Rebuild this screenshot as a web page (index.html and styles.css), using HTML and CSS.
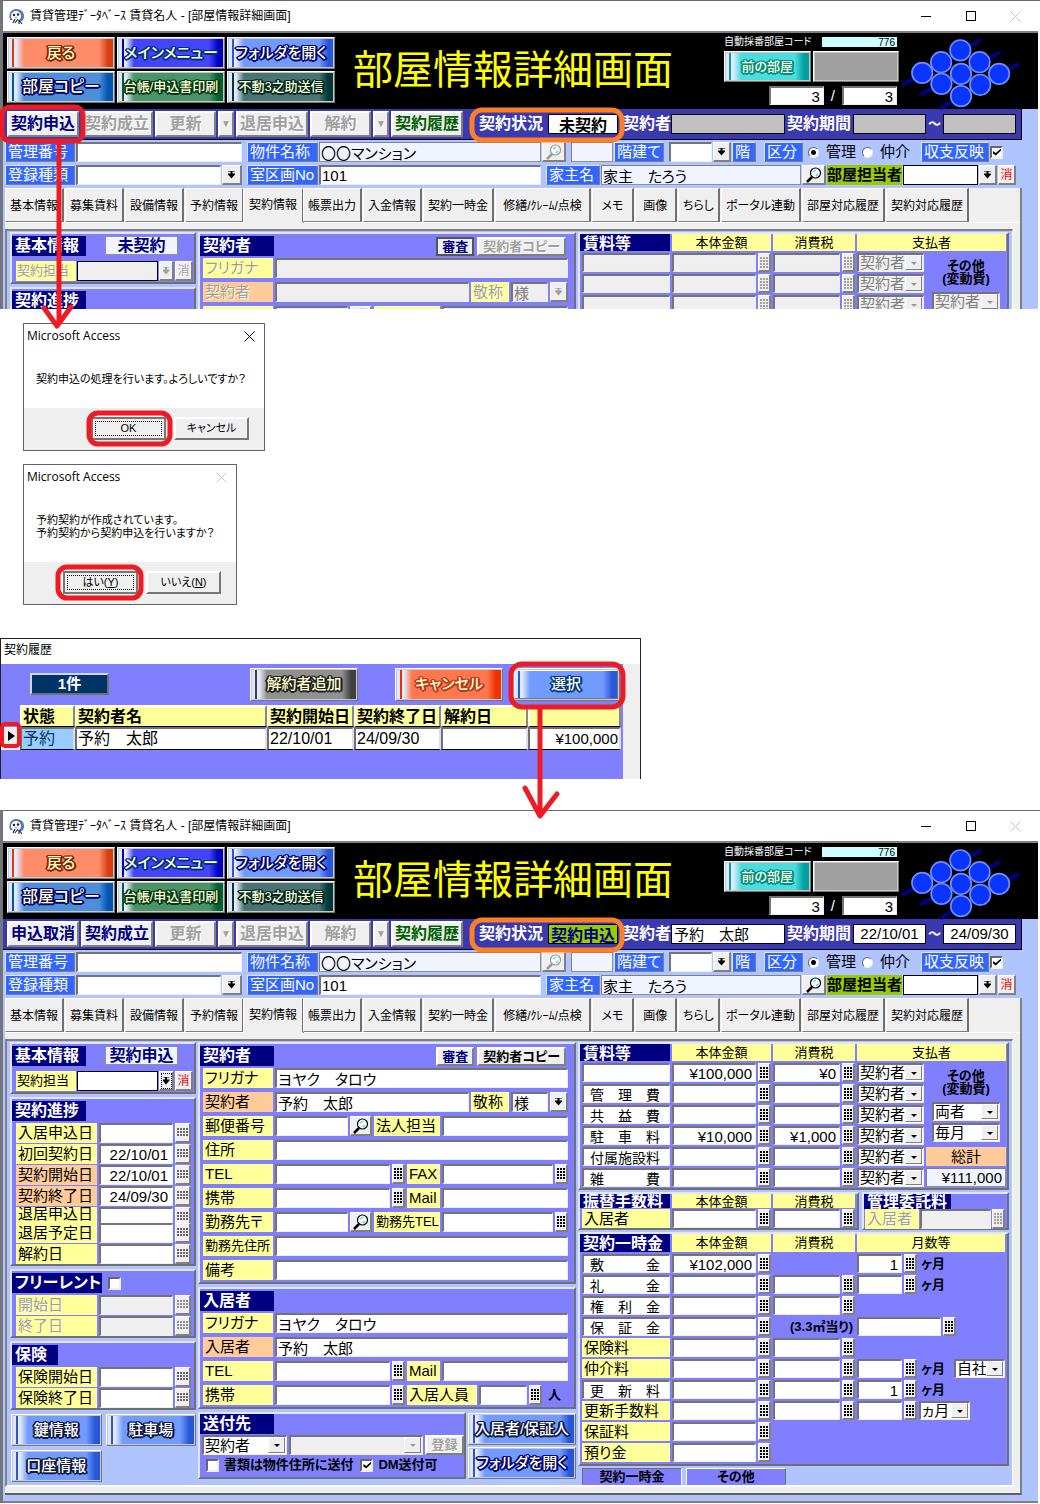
FILE: index.html
```html
<!DOCTYPE html>
<html lang="ja">
<head>
<meta charset="utf-8">
<title>契約申込の手順</title>
<link rel="stylesheet" href="styles.css">
</head>
<body>
<svg class="defs" aria-hidden="true">
  <symbol id="bird" viewBox="0 0 17 17">
    <path d="M2 12C0 6 3 1 8 1c5 0 8 3 8 7 0 3-1 4-2 5" fill="#5a78b8"/>
    <circle cx="8" cy="8" r="5" fill="#fff"/>
    <circle cx="6" cy="7" r="1.2" fill="#123"/><circle cx="10" cy="6.500" r="1.200" fill="#123"/>
    <path d="M6.500 9l3-.5-1.500 2.500z" fill="#e9a23b"/>
    <path d="M5 15l2-4m0 4l3-4m1 1v4m0-4l3 4" stroke="#1d2f6b" stroke-width="1.200" fill="none"/>
  </symbol>
  <symbol id="lens" viewBox="0 0 18 18">
    <path d="M7 11L2 16" stroke="currentColor" stroke-width="2.500"/>
    <circle cx="10.500" cy="7" r="5" fill="#fff" stroke="currentColor" stroke-width="1.200"/>
    <path d="M8 6l3-2M11 10l2-2" stroke="#3fe0ee" stroke-width="1.500"/>
  </symbol>
  <symbol id="logo" viewBox="615 97 365 220">
    <path d="M858 108L628 240M915 145L685 268M973 180L743 310" stroke="#000080" stroke-width="12" stroke-linecap="round"/>
    <g fill="#0a34ff" stroke="#6f8dff" stroke-width="5">
      <circle cx="800" cy="137" r="31"/><circle cx="742" cy="173" r="31"/><circle cx="858" cy="173" r="31"/>
      <circle cx="685" cy="205" r="31"/><circle cx="802" cy="208" r="31"/><circle cx="917" cy="208" r="31"/>
      <circle cx="743" cy="238" r="31"/><circle cx="860" cy="241" r="31"/><circle cx="802" cy="275" r="31"/>
    </g>
  </symbol>
  <symbol id="close" viewBox="0 0 11 11"><path d="M.5.5l10 10M10.500.5l-10 10" stroke="currentColor" fill="none"/></symbol>
</svg>

<section class="window window-cut">
  <header class="titlebar">
    <svg class="app-icon"><use href="#bird"/></svg>
    <h2>賃貸管理ﾃﾞｰﾀﾍﾞｰｽ 賃貸名人 - [部屋情報詳細画面]</h2>
    <button class="ctl" aria-label="最小化"><i class="min"></i></button>
    <button class="ctl" aria-label="最大化"><i class="max"></i></button>
    <button class="ctl off" aria-label="閉じる"><svg class="x"><use href="#close"/></svg></button>
  </header>
  <div class="app">
    <div class="banner">
      <div class="main-buttons">
        <button class="pic red">戻る</button><button class="pic blue">メインメニュー</button><button class="pic sky">フォルダを開く</button>
        <button class="pic azure">部屋コピー</button><button class="pic green small">台帳/申込書印刷</button><button class="pic teal small">不動3之助送信</button>
      </div>
      <h1>部屋情報詳細画面</h1>
      <div class="code">
        <div class="code-line"><label for="a-code">自動採番部屋コード</label><input id="a-code" value="776" readonly></div>
        <div class="code-buttons"><button class="pic aqua small">前の部屋</button><button class="pic blank" aria-label="次の部屋" disabled></button></div>
        <div class="code-page"><input class="f r" value="3" aria-label="現在"><span>/</span><input class="f r" value="3" aria-label="総数"></div>
      </div>
      <svg class="logo"><use href="#logo"/></svg>
    </div>
    <div class="menu">
      <button class="btn w72 navy">契約申込</button><button class="btn w72" disabled>契約成立</button><button class="btn w61" disabled>更新</button><button class="btn w16" aria-label="更新メニュー" disabled>▼</button><button class="btn w72" disabled>退居申込</button><button class="btn w61" disabled>解約</button><button class="btn w16" aria-label="解約メニュー" disabled>▼</button><button class="btn w72 dkgreen">契約履歴</button>
      <label class="status-label" for="a-st">契約状況</label><input id="a-st" class="box status" value="未契約" readonly>
      <label class="who-label" for="a-who">契約者</label><input id="a-who" class="box who" disabled>
      <label for="a-from">契約期間</label><input id="a-from" class="box date" disabled><span class="tilde">～</span><input class="box date" aria-label="契約期間 終了" disabled>
    </div>
    <div class="info info-1">
      <label class="tag" for="a-no">管理番号</label><input id="a-no" class="f">
      <label class="tag gap" for="a-bk">物件名称</label><input id="a-bk" class="f ro" value="〇〇マンション" readonly>
      <button class="mini lens off" aria-label="検索"><svg><use href="#lens"/></svg></button>
      <input id="a-fl" class="f ro inset" readonly><label class="tag" for="a-fl">階建て</label>
      <input id="a-f2" class="f inset"><button class="mini drop" aria-label="階を選択"></button><label class="tag" for="a-f2">階</label>
      <span class="tag kubun">区分</span>
      <span class="radios"><label><input type="radio" name="a-k" checked>管理</label><label><input type="radio" name="a-k">仲介</label></span>
      <label class="tag gap" for="a-sy">収支反映</label><input id="a-sy" type="checkbox" checked>
    </div>
    <div class="info info-2">
      <label class="tag" for="a-ty">登録種類</label><input id="a-ty" class="f"><button class="mini drop" aria-label="登録種類を選択"></button>
      <label class="tag gap" for="a-rm">室区画No</label><input id="a-rm" class="f" value="101">
      <label class="tag gap" for="a-ow">家主名</label><input id="a-ow" class="f ro" value="家主　たろう" readonly>
      <button class="mini lens" aria-label="家主検索"><svg><use href="#lens"/></svg></button>
      <label class="staff" for="a-sf">部屋担当者</label><input id="a-sf" class="f line"><button class="mini drop" aria-label="担当者を選択"></button><button class="mini del">消</button>
    </div>
    <div class="tabpage">
      <nav class="tabs">
        <button>基本情報</button><button>募集賃料</button><button>設備情報</button><button>予約情報</button><button class="on">契約情報</button><button>帳票出力</button><button>入金情報</button><button>契約一時金</button><button class="roomy">修繕/ｸﾚｰﾑ/点検</button><button>メモ</button><button>画像</button><button>ちらし</button><button>ポータル連動</button><button>部屋対応履歴</button><button>契約対応履歴</button>
      </nav>
      <div class="pane">
        <div class="column">
          <div class="panel basic">
            <div class="head"><h3>基本情報</h3><output>未契約</output></div>
            <div class="row-staff"><label class="y off" for="a-ks">契約担当</label><input id="a-ks" class="f line" disabled><button class="mini drop" aria-label="選択" disabled></button><button class="mini del" disabled>消</button></div>
          </div>
          <div class="panel rows"><h3>契約進捗</h3></div>
        </div>
        <div class="column">
          <div class="panel person">
            <div class="head"><h3>契約者</h3><span class="head-buttons"><button class="btn sm navy focus">審査</button><button class="btn sm" disabled>契約者コピー</button></span></div>
            <div class="p1"><label class="y off" for="a-fu">フリガナ</label><input id="a-fu" class="f" disabled></div>
            <div class="p2"><label class="y o off" for="a-na">契約者</label><input id="a-na" class="f" disabled><label class="y off" for="a-ke">敬称</label><input id="a-ke" class="f" value="様" disabled><button class="mini drop" aria-label="敬称を選択" disabled></button></div>
            <div class="p3"><span class="y"></span><input class="f" aria-label="郵便番号" disabled><button class="mini lens off" aria-label="検索" disabled><svg><use href="#lens"/></svg></button><span class="y"></span><input class="f" aria-label="法人担当" disabled></div>
          </div>
        </div>
        <div class="column right">
          <div class="panel money rent">
            <h3>賃料等</h3><span class="hd two">本体金額</span><span class="hd two">消費税</span><span class="hd two">支払者</span>
            <input class="f n" aria-label="賃料 項目名" disabled><input class="f a" aria-label="賃料 金額" disabled><button class="mini calc" aria-label="電卓" disabled></button><input class="f" aria-label="賃料 税" disabled><button class="mini calc" aria-label="電卓" disabled></button><span class="sel off"><select aria-label="支払者" disabled><option>契約者</option></select></span>
            <input class="f n" aria-label="管理費 項目名" disabled><input class="f a" aria-label="管理費 金額" disabled><button class="mini calc" aria-label="電卓" disabled></button><input class="f" aria-label="管理費 税" disabled><button class="mini calc" aria-label="電卓" disabled></button><span class="sel off"><select aria-label="支払者" disabled><option>契約者</option></select></span>
            <input class="f n" aria-label="共益費 項目名" disabled><input class="f a" aria-label="共益費 金額" disabled><button class="mini calc" aria-label="電卓" disabled></button><input class="f" aria-label="共益費 税" disabled><button class="mini calc" aria-label="電卓" disabled></button><span class="sel off"><select aria-label="支払者" disabled><option>契約者</option></select></span>
            <div class="other"><b>その他<br>(変動費)</b><span class="sel off"><select aria-label="その他 支払者" disabled><option>契約者</option></select></span></div>
          </div>
        </div>
      </div>
    </div>
  </div>
</section>

<section class="dialog dialog-apply">
  <header><h2>Microsoft Access</h2><button class="ctl" aria-label="閉じる"><svg class="x"><use href="#close"/></svg></button></header>
  <p>契約申込の処理を行います。よろしいですか？</p>
  <footer><button class="dbtn default">OK</button><button class="dbtn">キャンセル</button></footer>
</section>

<section class="dialog dialog-reserve">
  <header><h2>Microsoft Access</h2><button class="ctl off" aria-label="閉じる"><svg class="x"><use href="#close"/></svg></button></header>
  <p>予約契約が作成されています。<br>予約契約から契約申込を行いますか？</p>
  <footer><button class="dbtn default">はい(<u>Y</u>)</button><button class="dbtn">いいえ(<u>N</u>)</button></footer>
</section>

<section class="history">
  <h2>契約履歴</h2>
  <div class="history-body">
    <div class="history-bar">
      <output>1件</output>
      <button class="pic gray">解約者追加</button><button class="pic coral">キャンセル</button><button class="pic sky pick">選択</button>
    </div>
    <table>
      <colgroup><col class="c-mark"><col class="c-state"><col class="c-name"><col class="c-day"><col class="c-day"><col class="c-day"><col class="c-sum"></colgroup>
      <thead><tr><td></td><th>状態</th><th>契約者名</th><th>契約開始日</th><th>契約終了日</th><th>解約日</th><th></th></tr></thead>
      <tbody><tr><td class="mark"><i></i></td><td class="state">予約</td><td>予約　太郎</td><td>22/10/01</td><td>24/09/30</td><td></td><td class="sum">¥100,000</td></tr></tbody>
    </table>
  </div>
</section>

<section class="window window-full">
  <header class="titlebar">
    <svg class="app-icon"><use href="#bird"/></svg>
    <h2>賃貸管理ﾃﾞｰﾀﾍﾞｰｽ 賃貸名人 - [部屋情報詳細画面]</h2>
    <button class="ctl" aria-label="最小化"><i class="min"></i></button>
    <button class="ctl" aria-label="最大化"><i class="max"></i></button>
    <button class="ctl off" aria-label="閉じる"><svg class="x"><use href="#close"/></svg></button>
  </header>
  <div class="app">
    <div class="banner">
      <div class="main-buttons">
        <button class="pic red">戻る</button><button class="pic blue">メインメニュー</button><button class="pic sky">フォルダを開く</button>
        <button class="pic azure">部屋コピー</button><button class="pic green small">台帳/申込書印刷</button><button class="pic teal small">不動3之助送信</button>
      </div>
      <h1>部屋情報詳細画面</h1>
      <div class="code">
        <div class="code-line"><label for="b-code">自動採番部屋コード</label><input id="b-code" value="776" readonly></div>
        <div class="code-buttons"><button class="pic aqua small">前の部屋</button><button class="pic blank" aria-label="次の部屋" disabled></button></div>
        <div class="code-page"><input class="f r" value="3" aria-label="現在"><span>/</span><input class="f r" value="3" aria-label="総数"></div>
      </div>
      <svg class="logo"><use href="#logo"/></svg>
    </div>
    <div class="menu">
      <button class="btn w72 navy">申込取消</button><button class="btn w72 navy">契約成立</button><button class="btn w61" disabled>更新</button><button class="btn w16" aria-label="更新メニュー" disabled>▼</button><button class="btn w72" disabled>退居申込</button><button class="btn w61" disabled>解約</button><button class="btn w16" aria-label="解約メニュー" disabled>▼</button><button class="btn w72 dkgreen">契約履歴</button>
      <label class="status-label" for="b-st">契約状況</label><input id="b-st" class="box status applied" value="契約申込" readonly>
      <label class="who-label" for="b-who">契約者</label><input id="b-who" class="box who" value="予約　太郎">
      <label for="b-from">契約期間</label><input id="b-from" class="box date" value="22/10/01"><span class="tilde">～</span><input class="box date" aria-label="契約期間 終了" value="24/09/30">
    </div>
    <div class="info info-1">
      <label class="tag" for="b-no">管理番号</label><input id="b-no" class="f">
      <label class="tag gap" for="b-bk">物件名称</label><input id="b-bk" class="f ro" value="〇〇マンション" readonly>
      <button class="mini lens off" aria-label="検索"><svg><use href="#lens"/></svg></button>
      <input id="b-fl" class="f ro inset" readonly><label class="tag" for="b-fl">階建て</label>
      <input id="b-f2" class="f inset"><button class="mini drop" aria-label="階を選択"></button><label class="tag" for="b-f2">階</label>
      <span class="tag kubun">区分</span>
      <span class="radios"><label><input type="radio" name="b-k" checked>管理</label><label><input type="radio" name="b-k">仲介</label></span>
      <label class="tag gap" for="b-sy">収支反映</label><input id="b-sy" type="checkbox" checked>
    </div>
    <div class="info info-2">
      <label class="tag" for="b-ty">登録種類</label><input id="b-ty" class="f"><button class="mini drop" aria-label="登録種類を選択"></button>
      <label class="tag gap" for="b-rm">室区画No</label><input id="b-rm" class="f" value="101">
      <label class="tag gap" for="b-ow">家主名</label><input id="b-ow" class="f ro" value="家主　たろう" readonly>
      <button class="mini lens" aria-label="家主検索"><svg><use href="#lens"/></svg></button>
      <label class="staff" for="b-sf">部屋担当者</label><input id="b-sf" class="f line"><button class="mini drop" aria-label="担当者を選択"></button><button class="mini del">消</button>
    </div>
    <div class="tabpage">
      <nav class="tabs">
        <button>基本情報</button><button>募集賃料</button><button>設備情報</button><button>予約情報</button><button class="on">契約情報</button><button>帳票出力</button><button>入金情報</button><button>契約一時金</button><button class="roomy">修繕/ｸﾚｰﾑ/点検</button><button>メモ</button><button>画像</button><button>ちらし</button><button>ポータル連動</button><button>部屋対応履歴</button><button>契約対応履歴</button>
      </nav>
      <div class="pane">
        <div class="column">
          <div class="panel basic">
            <div class="head"><h3>基本情報</h3><output>契約申込</output></div>
            <div class="row-staff"><label class="y" for="b-ks">契約担当</label><input id="b-ks" class="f line"><button class="mini drop focus" aria-label="選択"></button><button class="mini del">消</button></div>
          </div>
          <div class="panel rows">
            <h3>契約進捗</h3>
            <div class="d"><label class="y" for="d1">入居申込日</label><input id="d1" class="f"><button class="mini cal" aria-label="カレンダー"></button></div>
            <div class="d"><label class="y" for="d2">初回契約日</label><input id="d2" class="f c" value="22/10/01"><button class="mini cal" aria-label="カレンダー"></button></div>
            <div class="d"><label class="y o" for="d3">契約開始日</label><input id="d3" class="f c" value="22/10/01"><button class="mini cal" aria-label="カレンダー"></button></div>
            <div class="d"><label class="y o" for="d4">契約終了日</label><input id="d4" class="f c" value="24/09/30"><button class="mini cal" aria-label="カレンダー"></button></div>
            <div class="d short"><label class="y" for="d5">退居申込日</label><input id="d5" class="f"><button class="mini cal" aria-label="カレンダー"></button></div>
            <div class="d"><label class="y" for="d6">退居予定日</label><input id="d6" class="f"><button class="mini cal" aria-label="カレンダー"></button></div>
            <div class="d"><label class="y" for="d7">解約日</label><input id="d7" class="f"><button class="mini cal" aria-label="カレンダー"></button></div>
          </div>
          <div class="panel rows">
            <div class="head free"><h3><label for="free">フリーレント</label></h3><input id="free" type="checkbox"></div>
            <div class="d"><label class="y off" for="d8">開始日</label><input id="d8" class="f" disabled><button class="mini cal" aria-label="カレンダー" disabled></button></div>
            <div class="d"><label class="y off" for="d9">終了日</label><input id="d9" class="f" disabled><button class="mini cal" aria-label="カレンダー" disabled></button></div>
          </div>
          <div class="panel rows">
            <h3 class="narrow">保険</h3>
            <div class="d"><label class="y" for="d10">保険開始日</label><input id="d10" class="f"><button class="mini cal" aria-label="カレンダー"></button></div>
            <div class="d"><label class="y" for="d11">保険終了日</label><input id="d11" class="f"><button class="mini cal" aria-label="カレンダー"></button></div>
          </div>
          <div class="links"><button class="pic sky dark">鍵情報</button><button class="pic sky dark">駐車場</button><button class="pic sky dark">口座情報</button></div>
        </div>

        <div class="column">
          <div class="panel person">
            <div class="head"><h3>契約者</h3><span class="head-buttons"><button class="btn sm navy">審査</button><button class="btn sm">契約者コピー</button></span></div>
            <div class="p1"><label class="y" for="m1">フリガナ</label><input id="m1" class="f" value="ヨヤク　タロウ"></div>
            <div class="p2"><label class="y o" for="m2">契約者</label><input id="m2" class="f" value="予約　太郎"><label class="y" for="m3">敬称</label><input id="m3" class="f" value="様"><button class="mini drop" aria-label="敬称を選択"></button></div>
            <div class="p3"><label class="y" for="m4">郵便番号</label><input id="m4" class="f"><button class="mini lens" aria-label="検索"><svg><use href="#lens"/></svg></button><label class="y" for="m5">法人担当</label><input id="m5" class="f"></div>
            <div class="p1"><label class="y" for="m6">住所</label><input id="m6" class="f"></div>
            <div class="p4"><label class="y" for="m7">TEL</label><input id="m7" class="f"><button class="mini calc" aria-label="電卓"></button><label class="y" for="m8">FAX</label><input id="m8" class="f"><button class="mini calc" aria-label="電卓"></button></div>
            <div class="p4"><label class="y" for="m9">携帯</label><input id="m9" class="f"><button class="mini calc" aria-label="電卓"></button><label class="y" for="m10">Mail</label><input id="m10" class="f wide"></div>
            <div class="p3 end"><label class="y" for="m11">勤務先〒</label><input id="m11" class="f"><button class="mini lens" aria-label="検索"><svg><use href="#lens"/></svg></button><label class="y tight" for="m12">勤務先TEL</label><input id="m12" class="f"><button class="mini calc" aria-label="電卓"></button></div>
            <div class="p1"><label class="y tight" for="m13">勤務先住所</label><input id="m13" class="f"></div>
            <div class="p1"><label class="y" for="m14">備考</label><input id="m14" class="f"></div>
          </div>
          <div class="panel person">
            <div class="head"><h3>入居者</h3></div>
            <div class="p1"><label class="y" for="n1">フリガナ</label><input id="n1" class="f" value="ヨヤク　タロウ"></div>
            <div class="p1"><label class="y o" for="n2">入居者</label><input id="n2" class="f" value="予約　太郎"></div>
            <div class="p4"><label class="y" for="n3">TEL</label><input id="n3" class="f"><button class="mini calc" aria-label="電卓"></button><label class="y" for="n4">Mail</label><input id="n4" class="f wide"></div>
            <div class="p5"><label class="y" for="n5">携帯</label><input id="n5" class="f"><button class="mini calc" aria-label="電卓"></button><label class="y" for="n6">入居人員</label><input id="n6" class="f"><button class="mini calc" aria-label="電卓"></button><b>人</b></div>
          </div>
          <div class="send-area">
            <div class="panel send">
              <h3>送付先</h3>
              <div class="send-row"><span class="sel"><select aria-label="送付先"><option>契約者</option></select></span><span class="sel off"><select aria-label="送付先の詳細" disabled><option></option></select></span><button class="btn sm" disabled>登録</button></div>
              <div class="checks"><label><input type="checkbox">書類は物件住所に送付</label><label><input type="checkbox" checked>DM送付可</label></div>
            </div>
            <div class="send-links"><button class="pic sky dark">入居者/保証人</button><button class="pic sky">フォルダを開く</button></div>
          </div>
        </div>

        <div class="column right">
          <div class="panel money rent">
            <h3>賃料等</h3><span class="hd two">本体金額</span><span class="hd two">消費税</span><span class="hd two">支払者</span>
            <input class="f n" aria-label="項目名"><input class="f r a" aria-label="金額" value="¥100,000"><button class="mini calc" aria-label="電卓"></button><input class="f r" aria-label="税" value="¥0"><button class="mini calc" aria-label="電卓"></button><span class="sel"><select aria-label="支払者"><option>契約者</option></select></span>
            <input class="f n" aria-label="項目名" value="管　理　費"><input class="f r a" aria-label="管理費 金額"><button class="mini calc" aria-label="電卓"></button><input class="f r" aria-label="管理費 税"><button class="mini calc" aria-label="電卓"></button><span class="sel"><select aria-label="管理費 支払者"><option>契約者</option></select></span>
            <input class="f n" aria-label="項目名" value="共　益　費"><input class="f r a" aria-label="共益費 金額"><button class="mini calc" aria-label="電卓"></button><input class="f r" aria-label="共益費 税"><button class="mini calc" aria-label="電卓"></button><span class="sel"><select aria-label="共益費 支払者"><option>契約者</option></select></span>
            <input class="f n" aria-label="項目名" value="駐　車　料"><input class="f r a" aria-label="駐車料 金額" value="¥10,000"><button class="mini calc" aria-label="電卓"></button><input class="f r" aria-label="駐車料 税" value="¥1,000"><button class="mini calc" aria-label="電卓"></button><span class="sel"><select aria-label="駐車料 支払者"><option>契約者</option></select></span>
            <input class="f n" aria-label="項目名" value="付属施設料"><input class="f r a" aria-label="付属施設料 金額"><button class="mini calc" aria-label="電卓"></button><input class="f r" aria-label="付属施設料 税"><button class="mini calc" aria-label="電卓"></button><span class="sel"><select aria-label="付属施設料 支払者"><option>契約者</option></select></span>
            <label class="total-label" for="total">総計</label>
            <input class="f n" aria-label="項目名" value="雑　　　費"><input class="f r a" aria-label="雑費 金額"><button class="mini calc" aria-label="電卓"></button><input class="f r" aria-label="雑費 税"><button class="mini calc" aria-label="電卓"></button><span class="sel"><select aria-label="雑費 支払者"><option>契約者</option></select></span>
            <input id="total" class="f ro r" value="¥111,000" readonly>
            <div class="other"><b>その他<br>(変動費)</b><span class="sel"><select aria-label="その他 支払者"><option>両者</option></select></span><span class="sel"><select aria-label="その他 時期"><option>毎月</option></select></span></div>
          </div>
          <div class="fees">
            <div class="panel money fee">
              <h3>振替手数料</h3><span class="hd two">本体金額</span><span class="hd two">消費税</span>
              <label class="y n" for="fee">入居者</label><input id="fee" class="f r a"><button class="mini calc" aria-label="電卓"></button><input class="f r" aria-label="振替手数料 税"><button class="mini calc" aria-label="電卓"></button>
            </div>
            <div class="panel trust">
              <h3>管理委託料</h3>
              <div class="trust-row"><label class="y off" for="trust">入居者</label><input id="trust" class="f" disabled><button class="mini calc" aria-label="電卓" disabled></button></div>
            </div>
          </div>
          <div class="panel money once">
            <h3>契約一時金</h3><span class="hd two">本体金額</span><span class="hd two">消費税</span><span class="hd">月数等</span>
            <input class="f n" aria-label="項目名" value="敷　　　金"><input class="f r a" aria-label="敷金 金額" value="¥102,000"><button class="mini calc" aria-label="電卓"></button><span class="months"><input class="f r" aria-label="敷金 月数" value="1"><button class="mini calc" aria-label="電卓"></button><b>ヶ月</b></span>
            <input class="f n" aria-label="項目名" value="礼　　　金"><input class="f r a" aria-label="礼金 金額"><button class="mini calc" aria-label="電卓"></button><input class="f r" aria-label="礼金 税"><button class="mini calc" aria-label="電卓"></button><span class="months"><input class="f r" aria-label="礼金 月数"><button class="mini calc" aria-label="電卓"></button><b>ヶ月</b></span>
            <input class="f n" aria-label="項目名" value="権　利　金"><input class="f r a" aria-label="権利金 金額"><button class="mini calc" aria-label="電卓"></button><input class="f r" aria-label="権利金 税"><button class="mini calc" aria-label="電卓"></button>
            <input class="f n" aria-label="項目名" value="保　証　金"><input class="f r a" aria-label="保証金 金額"><button class="mini calc" aria-label="電卓"></button><label class="unit" for="tsubo">(3.3㎡当り)</label><span class="months"><input id="tsubo" class="f r long"><button class="mini calc" aria-label="電卓"></button></span>
            <label class="y n" for="o5">保険料</label><input id="o5" class="f r a"><button class="mini calc" aria-label="電卓"></button><input class="f r" aria-label="保険料 税"><button class="mini calc" aria-label="電卓"></button>
            <label class="y n" for="o6">仲介料</label><input id="o6" class="f r a"><button class="mini calc" aria-label="電卓"></button><input class="f r" aria-label="仲介料 税"><button class="mini calc" aria-label="電卓"></button><span class="months"><input class="f r" aria-label="仲介料 月数"><button class="mini calc" aria-label="電卓"></button><b>ヶ月</b><span class="sel"><select aria-label="仲介料 区分"><option>自社</option></select></span></span>
            <input class="f n" aria-label="項目名" value="更　新　料"><input class="f r a" aria-label="更新料 金額"><button class="mini calc" aria-label="電卓"></button><input class="f r" aria-label="更新料 税"><button class="mini calc" aria-label="電卓"></button><span class="months"><input class="f r" aria-label="更新料 月数" value="1"><button class="mini calc" aria-label="電卓"></button><b>ヶ月</b></span>
            <label class="y n" for="o8">更新手数料</label><input id="o8" class="f r a"><button class="mini calc" aria-label="電卓"></button><input class="f r" aria-label="更新手数料 税"><button class="mini calc" aria-label="電卓"></button><span class="months"><input class="f r" aria-label="更新手数料 月数"><button class="mini calc" aria-label="電卓"></button><span class="sel"><select aria-label="更新手数料 単位"><option>ヵ月</option></select></span></span>
            <label class="y n" for="o9">保証料</label><input id="o9" class="f r a"><button class="mini calc" aria-label="電卓"></button>
            <label class="y n" for="o10">預り金</label><input id="o10" class="f r a"><button class="mini calc" aria-label="電卓"></button>
          </div>
          <nav class="subtabs"><button class="on">契約一時金</button><button>その他</button></nav>
        </div>
      </div>
    </div>
  </div>
</section>

<svg class="notes" width="1040" height="1504" viewBox="0 0 1040 1504" aria-hidden="true">
  <g fill="none" stroke="#ed1c24" stroke-width="5" stroke-linecap="round" stroke-linejoin="round">
    <rect x="2" y="107" width="81" height="34" rx="8"/>
    <path d="M59 142V322M44 308L57 326L71 307"/>
    <rect x="89" y="413" width="81" height="31" rx="9"/>
    <rect x="58" y="567" width="83" height="31" rx="9"/>
    <rect x="511" y="664" width="112" height="43" rx="11"/>
    <path d="M540 708V815M525 788L540 816L557 794"/>
    <rect x="2" y="724" width="17" height="22" rx="3" stroke-width="4"/>
  </g>
  <g fill="none" stroke="#ff7f27" stroke-width="5">
    <rect x="472" y="110" width="150" height="30" rx="10"/>
    <rect x="472" y="920" width="150" height="30" rx="10"/>
  </g>
</svg>
</body>
</html>
```

FILE: styles.css
```css
* { box-sizing: border-box; }

body {
  margin: 0;
  position: relative;
  background: #fff;
  color: #000;
  font: 15px/20px "Liberation Sans", "Noto Sans CJK JP", sans-serif;
  font-feature-settings: "palt";
}

h1, h2, h3, p { margin: 0; font-weight: normal; }
button, input, select { margin: 0; font: inherit; color: inherit; font-feature-settings: inherit; border-radius: 0; min-width: 0; }
button { padding: 0; white-space: nowrap; }
label, b, span { white-space: nowrap; }
.defs { position: absolute; width: 0; height: 0; }
.notes { position: absolute; left: 0; top: 0; pointer-events: none; }

/* window frame */
.window { border-top: 1px solid #6a6a6a; border-left: 3px solid #74747c; padding-right: 2px; overflow: hidden; }
.window-cut { height: 309px; }
.titlebar { display: flex; align-items: center; height: 32px; padding-left: 5px; border-bottom: 2px solid #808080; background: #fff; }
.titlebar h2 { flex: 1; margin-left: 5px; font-size: 12px; }
.app-icon { width: 17px; height: 17px; }
.ctl { display: flex; justify-content: center; align-items: center; width: 45px; height: 28px; border: 0; background: none; color: #000; }
.ctl.off { color: #c4c4c4; }
.x { width: 11px; height: 11px; }
.min { width: 10px; border-top: 1px solid #000; }
.max { width: 10px; height: 10px; border: 1px solid #000; }
.app { background: #b0c4ff; }

/* black banner */
.banner { display: flex; align-items: flex-start; height: 76px; padding: 4px 18px 0 4px; background: #000; color: #fff; }
.main-buttons { display: grid; grid-template-columns: repeat(3, 108px); grid-auto-rows: 32px; gap: 2px; }
.banner h1 { flex: 1; margin-left: 18px; font-size: 40px; line-height: 66px; color: #ff0; white-space: nowrap; font-weight: 400; }
.code { width: 175px; display: grid; gap: 4px; }
.code-line { display: flex; justify-content: space-between; height: 10px; padding-right: 2px; font-size: 10px; line-height: 10px; }
.code-line input { width: 75px; height: 10px; padding: 0 2px; border: 0; background: #cff; color: #000; text-align: right; }
.code-buttons { display: grid; grid-template-columns: 1fr 1fr; gap: 2px; height: 31px; }
.code-page { display: flex; justify-content: flex-end; gap: 7px; height: 19px; padding-right: 2px; line-height: 19px; }
.code-page input { width: 55px; color: #000; }
.logo { width: 121px; height: 73px; }

/* picture-like buttons */
.pic {
  --c: #729bff; --e: #2858d8; --t: #ffffd0; --s: #000080;
  border: 2px solid; border-color: #fff #777 #777 #fff; outline: 1px solid #c8c8c8; outline-offset: -2px;
  background: linear-gradient(90deg, #dfe6ff 0 3px, var(--e) 3px 5px, #e4ebff 5px 7px, var(--c) 15px calc(100% - 14px), var(--e) calc(100% - 5px));
  color: var(--t); font-size: 15px; line-height: 20px; font-weight: 500;
  text-shadow: 1px 0 var(--s), -1px 0 var(--s), 0 1px var(--s), 0 -1px var(--s), 1px 1px var(--s), -1px -1px var(--s), 1px -1px var(--s), -1px 1px var(--s), 2px 0 var(--s), 2px 1px var(--s), -2px 0 var(--s), 0 2px var(--s);
}
.pic.small { font-size: 13px; }
.red { --c: #ff8c69; --e: #d83c10; --s: #7a2800; }
.coral { --c: #ff7850; --e: #f03000; --s: #b83818; }
.blue { --c: #4444ff; --e: #0000c0; --s: #003080; }
.azure { --c: #4c8ed8; --e: #0054b0; --s: #000070; font-size: 16px; }
.green { --c: #4a9468; --e: #006030; --s: #003818; }
.teal { --c: #4a7474; --e: #003838; --s: #002828; }
.aqua { --c: #4cdcdc; --e: #00a0a0; --s: #008c8c; }
.gray { --c: #909090; --e: #404040; --s: #202020; }
.dark { --t: #fff; --s: #101840; }
.pick { --s: #003890; border-width: 3px; }
.blank { background: #a0a0a0; }

/* plain raised buttons */
.btn { display: block; border: 2px solid; border-color: #fff #808080 #808080 #fff; background: #efefef; font-size: 16px; line-height: 20px; font-weight: bold; }
.btn:disabled, .mini:disabled { color: #a0a0a0; text-shadow: 1px 1px #fff; }
.btn.sm { font-size: 13px; line-height: 14px; padding: 0 4px; }
.w72 { width: 72px; } .w61 { width: 61px; }
.w16 { width: 16px; font-size: 10px; }
.navy { color: #000080; }
.dkgreen { color: #006000; }
.btn.focus { border-color: #555; }

.mini { display: flex; justify-content: center; align-items: center; width: 100%; height: 100%; border: 2px solid; border-color: #fff #808080 #808080 #fff; border-width: 1px 2px 2px 1px; background: #efefef; overflow: hidden; }
.drop::before { content: ""; width: 7px; height: 8px; background: currentColor; clip-path: polygon(0 0, 100% 0, 100% 1px, 64% 1px, 64% 3px, 100% 3px, 100% 4px, 50% 100%, 0 4px, 0 3px, 36% 3px, 36% 1px, 0 1px); }
.mini.focus { outline: 1px dotted #000; outline-offset: -3px; }
.calc::before { content: ""; flex: none; width: 8px; height: 11px; background: repeating-linear-gradient(90deg, transparent 0 2px, #efefef 2px 3px), repeating-linear-gradient(transparent 0 2px, #efefef 2px 3px), currentColor; }
.cal::before { content: ""; flex: none; width: 11px; height: 9px; background: repeating-linear-gradient(90deg, transparent 0 2px, #efefef 2px 3px), repeating-linear-gradient(transparent 0 2px, #efefef 2px 3px), #666; }
.cal:disabled::before { opacity: .7; }
.lens svg { flex: none; width: 18px; height: 18px; }
.lens.off { color: #999; }
.del { font-size: 12px; color: #f00000; }

/* fields */
.f { display: block; width: 100%; height: 100%; padding: 0 3px 0 1px; border: solid; border-width: 2px 1px 1px 2px; border-color: #747474 #efefef #efefef #747474; background: #fff; line-height: 16px; }
.f:disabled { background: #efefef; color: #808080; }
.f.ro { border: 1px solid; border-color: #808080 #909090 #909090 #808080; background: #f0f4ff; }
.f.line { border: 1px solid #000; }
.f.r { text-align: right; }
.f.c { text-align: right; padding-right: 4px; }
input[type="checkbox"] { appearance: none; width: 13px; height: 13px; border: 2px solid; border-color: #686868 #efefef #efefef #686868; background: #fff; position: relative; align-self: center; flex: none; }
input[type="checkbox"]:checked::after { content: ""; position: absolute; left: 1px; top: 1px; width: 8px; height: 7px; background: #000; clip-path: polygon(0 35%, 35% 65%, 100% 0, 100% 30%, 35% 100%, 0 70%); }
input[type="radio"] { appearance: none; width: 11px; height: 11px; border: 1px solid; border-color: #686868 #efefef #efefef #686868; border-radius: 50%; background: #fff; }
input[type="radio"]:checked { background: radial-gradient(circle, #000 0 2px, #fff 3px); }
.sel { display: block; position: relative; height: 100%; }
.sel select { appearance: none; display: block; width: 100%; height: 100%; padding: 0 0 0 1px; border: solid; border-width: 2px 1px 1px 2px; border-color: #747474 #efefef #efefef #747474; background: #fff; line-height: 16px; opacity: 1; }
.sel.off select { background: #efefef; color: #808080; }
.sel::before { content: ""; position: absolute; right: 2px; top: 2px; bottom: 2px; width: 15px; border: 1px solid; border-color: #fff #808080 #808080 #fff; background: #efefef; pointer-events: none; }
.sel::after { content: ""; position: absolute; right: 7px; top: calc(50% - 1px); border: 3px solid transparent; border-top-color: #000; border-bottom: 0; pointer-events: none; }
.sel.off::after { border-top-color: #999; }

/* menu strip */
.menu { display: flex; align-items: center; gap: 2px; height: 31px; margin-right: 16px; padding: 0 5px 1px 4px; border-bottom: 1px solid #000; border-right: 1px solid #000; background: #3a39b0; color: #fff; font-size: 16px; font-weight: bold; }
.menu .btn { height: 26px; }
.status-label { margin-left: 14px; margin-right: 3px; }
.who-label { margin-left: 3px; margin-right: -2px; }
.box { height: 20px; padding: 0 2px; border: 1px solid #000; background: #fff; color: #000; font-size: 15px; line-height: 18px; font-weight: normal; }
.box:disabled { background: #c0c0c0; }
.status { width: 70px; font-size: 16px; font-weight: bold; text-align: center; }
.status.applied { background: #9c0; color: #000080; padding: 0; }
.who { flex: 1; }
.date { width: 73px; text-align: center; }
.tilde { width: 13px; font-size: 13px; text-align: center; }

/* blue label rows */
.info { display: grid; gap: 1px; height: 20px; margin: 2px 16px 0 2px; }
.info-1 { grid-template-columns: 70px 166px 75px 1fr 24px 46px 50px 47px 18px 24px 46px 112px 72px 16px; padding-right: 16px; }
.info-2 { grid-template-columns: 70px 145px 20px 75px 1fr 58px 200px 24px 75px 75px 18px 18px; padding-right: 6px; margin-top: 3px; }
.tag { border: 1px solid; border-color: #dce6ff #808080 #808080 #dce6ff; padding-left: 2px; background: #36f; color: #fff; line-height: 17px; }
.tag.gap { margin-left: 4px; }
.kubun { margin-left: 7px; }
.inset { width: auto; margin-left: 4px; }
.radios { display: flex; align-items: center; gap: 6px; padding-left: 4px; }
.radios label { display: flex; align-items: center; gap: 7px; }
.staff { background: #9c0; font-weight: bold; text-align: center; }

/* tabs */
.tabpage { margin: 3px 16px 0 2px; background: #efefef; border-right: 2px solid #808080; border-bottom: 2px solid #606060; padding-bottom: 6px; }
.tabs { display: flex; gap: 1px; height: 35px; border-bottom: 1px solid #fff; background: #efefef; }
.tabs button { min-width: 42px; padding: 2px 4px 0; border: 0 solid; border-width: 1px 2px 1px 1px; border-color: #fff #707070 #808080 #fff; background: #efefef; font-size: 12px; line-height: 16px; }
.tabs .roomy { padding: 2px 7px 0; }
.tabs .on { margin: 0 -2px -1px; padding: 0 5px 1px; border-bottom-color: #efefef; }
.pane { display: grid; grid-template-columns: 186px 1fr 431px; gap: 2px; align-items: start; margin: 6px 7px 0 0; padding: 1px 3px 0; border-top: 2px solid #808080; border-left: 2px solid #808080; border-right: 1px solid #fff; border-bottom: 2px solid #fff; background: #b0c4ff; }
.window-full .pane { min-height: 447px; }
.column { display: flex; flex-direction: column; gap: 3px; min-width: 0; }
.column.right { gap: 2px; }
.panel { border: 2px solid; border-color: #e4e4ff #707070 #707070 #e4e4ff; background: #8080ff; }
.panel h3 { width: 74px; height: 20px; padding-left: 3px; background: #000080; color: #fff; font-size: 16px; line-height: 20px; font-weight: bold; white-space: nowrap; overflow: hidden; }
.y { display: block; padding-left: 2px; background: #ff9; overflow: hidden; }
.y.o { background: #fc9; }
.y.off { color: #a0a08c; text-shadow: 1px 1px #fff; }

/* left column */
.head { display: flex; justify-content: space-between; }
.basic { display: grid; gap: 5px; padding: 2px 0 1px; }
.basic output { width: 73px; height: 19px; margin-right: 16px; border: 1px solid #9090a0; background: #f0f4ff; color: #000080; font-size: 16px; line-height: 17px; font-weight: bold; text-align: center; }
.row-staff { display: grid; grid-template-columns: 60px 1fr 15px 18px; gap: 1px; height: 20px; padding: 0 1px 0 4px; font-size: 13px; }
.row-staff label { padding-left: 1px; }
.rows { display: grid; gap: 2px; padding: 2px 0 1px; }
.d { display: grid; grid-template-columns: 81px 1fr 16px; gap: 2px; height: 19px; padding: 0 3px 0 4px; line-height: 19px; }
.d.short { height: 14px; line-height: 14px; }
.d.short .f { line-height: 10px; }
.head.free { justify-content: flex-start; gap: 6px; }
.free h3 { width: 90px; }
.panel h3.narrow { width: 46px; }
.links { display: grid; grid-template-columns: 1fr 1fr; grid-auto-rows: 32px; gap: 4px; padding: 1px 0 0 1px; }

/* middle column */
.person { display: grid; gap: 4px; padding: 2px 6px 2px 0; }
.person .head { margin-bottom: -2px; }
.head-buttons { display: flex; gap: 3px; padding-right: 2px; height: 19px; margin-top: 1px; }
.p1, .p2, .p3, .p4, .p5 { display: grid; gap: 2px; height: 20px; padding-left: 3px; }
.p1 { grid-template-columns: 70px 1fr; }
.p2 { grid-template-columns: 70px 1fr 38px 37px 18px; }
.p3 { grid-template-columns: 70px 73px 22px 66px 1fr; }
.p3.end { grid-template-columns: 70px 73px 22px 66px 1fr 13px; }
.p4 { grid-template-columns: 70px 115px 13px 33px 1fr 13px; }
.p5 { grid-template-columns: 70px 115px 13px 70px 1fr 13px 24px; }
.p5 b { padding-left: 4px; font-size: 13px; }
.wide { grid-column: span 2; }
.tight { font-size: 13px; }
.send-area { display: grid; grid-template-columns: 1fr 108px; gap: 2px; }
.send-row { display: grid; grid-template-columns: 85px 1fr 39px; gap: 2px; height: 20px; margin: 1px 0 0 2px; }
.checks { display: flex; gap: 7px; padding: 0 0 2px 6px; font-size: 13px; font-weight: bold; }
.checks label { display: flex; gap: 5px; }
.send-links { display: grid; grid-auto-rows: 32px; gap: 2px; padding-top: 1px; }

/* right column */
.money { display: grid; grid-template-columns: 90px 84px 13px 67px 13px 67px 1fr; grid-auto-rows: 19px; gap: 2px; line-height: 19px; }
.money h3 { width: auto; height: auto; line-height: 19px; }
.money .n { grid-column: 1; margin-left: 2px; width: 88px; }
.money input.n { padding-left: 6px; font-size: 14px; }
.money .a { grid-column: 2; }
.hd { background: #ff9; font-size: 13px; line-height: 17px; text-align: center; }
.two { grid-column: span 2; }
.rent { padding: 0 1px 1px 0; grid-template-rows: 17px; }
.other { grid-column: 7; grid-row: 2 / span 4; display: flex; flex-direction: column; align-items: center; gap: 2px; padding-top: 6px; }
.other b { margin-bottom: 5px; font-size: 13px; line-height: 13px; text-align: center; }
.other .sel { width: 68px; height: 19px; }
.total-label { grid-column: 7; grid-row: 6; background: #fc9; text-align: center; }
#total { grid-column: 7; grid-row: 7; }
.fees { display: grid; grid-template-columns: 281px 1fr; gap: 3px; }
.fee { grid-template-columns: 90px 84px 13px 67px 13px; grid-template-rows: 14px 19px; row-gap: 1px; }
.fee h3, .fee .hd { overflow: hidden; line-height: 15px; height: 14px; }
.trust h3 { width: 87px; height: 15px; line-height: 16px; }
.trust-row { display: grid; grid-template-columns: 54px 1fr 13px; gap: 1px; height: 19px; padding: 0 2px 0 1px; line-height: 19px; }
.once { grid-template-columns: 90px 84px 13px 67px 13px 1fr; grid-template-rows: 18px; padding: 0 3px 2px 0; }
.months { grid-column: 6; display: flex; gap: 2px; }
.months .f { width: 45px; }
.months .f.long { width: 84px; }
.months .calc { width: 13px; }
.months b { width: 33px; padding-left: 2px; font-size: 13px; }
.months .sel { width: 51px; }
.unit { grid-column: span 2; font-size: 13px; font-weight: bold; text-align: right; padding-right: 2px; }
.subtabs { display: flex; gap: 4px; padding-left: 4px; }
.subtabs button { width: 100px; height: 17px; border: 1px solid; border-color: #fff #707070 #8080ff #fff; background: #8080ff; font-size: 13px; line-height: 15px; font-weight: bold; }
.subtabs .on { border-color: #707070 #fff #8080ff #707070; }

.window-full .app { padding-bottom: 6px; border-bottom: 2px solid #808080; }

/* message dialogs */
.dialog { display: flex; flex-direction: column; margin-left: 23px; border: 1px solid #62626e; background: #fff; font-size: 11px; line-height: 13px; }
.dialog header { display: flex; justify-content: space-between; align-items: center; height: 24px; padding-left: 3px; }
.dialog h2 { font: 12px/16px "Open Sans", "Noto Sans", sans-serif; }
.dialog .ctl { width: 30px; height: 24px; }
.dialog p { flex: 1; padding: 25px 0 0 12px; }
.dialog footer { display: flex; justify-content: flex-end; gap: 8px; height: 42px; padding: 9px 15px 0 0; background: #efefef; }
.dialog-apply { width: 242px; height: 128px; margin-top: 14px; }
.dialog-reserve { width: 214px; height: 141px; margin-top: 13px; }
.dbtn { width: 75px; height: 23px; border: 2px solid; border-color: #fff #777 #777 #fff; background: #efefef; }
.dbtn.default { outline: 1px dotted #000; outline-offset: -5px; border-color: #777; }

/* contract history */
.history { width: 641px; height: 141px; margin: 33px 0 31px; border: 1px solid #222; border-width: 1px 1px 0; }
.history h2 { height: 25px; padding-left: 3px; font-size: 12px; line-height: 23px; }
.history-body { height: 115px; margin-right: 17px; background: #8080ff; box-shadow: 17px 0 #efefef; }
.history-bar { display: flex; align-items: center; height: 41px; padding: 2px 3px 3px 29px; }
.history-bar output { width: 79px; height: 22px; margin-right: auto; border: 2px solid; border-color: #d0d8f0 #707070 #707070 #d0d8f0; background: #036; color: #fff; line-height: 18px; font-weight: bold; text-align: center; }
.history-bar .pic { width: 108px; height: 33px; margin-left: 9px; }
.history-bar .coral { margin-left: 37px; }
.history table { width: 620px; table-layout: fixed; border-collapse: separate; border-spacing: 0; }
.history td, .history th { height: 22px; padding: 0 1px; text-align: left; font-size: 16px; line-height: 18px; white-space: nowrap; }
.history th { border: 2px solid; border-color: #fff #888 #888 #fff; border-bottom: 1px solid #000; background: #ff9; }
.history tbody td { height: 23px; border: 2px solid; border-color: #707070 #dcdcec #000 #707070; border-bottom-width: 1px; background: #fff; }
.c-mark { width: 19px; } .c-state { width: 55px; } .c-name { width: 192px; } .c-day { width: 87px; }
.history tbody .mark { border: 0; background: #efefef; }
.mark i { display: block; width: 7px; margin: 0 0 5px 6px; border: 5px solid transparent; border-left: 7px solid #000; border-right: 0; }
.history tbody .state { background: #9cf; color: #036; }
.history tbody .sum { text-align: right; font-size: 15px; }
```
